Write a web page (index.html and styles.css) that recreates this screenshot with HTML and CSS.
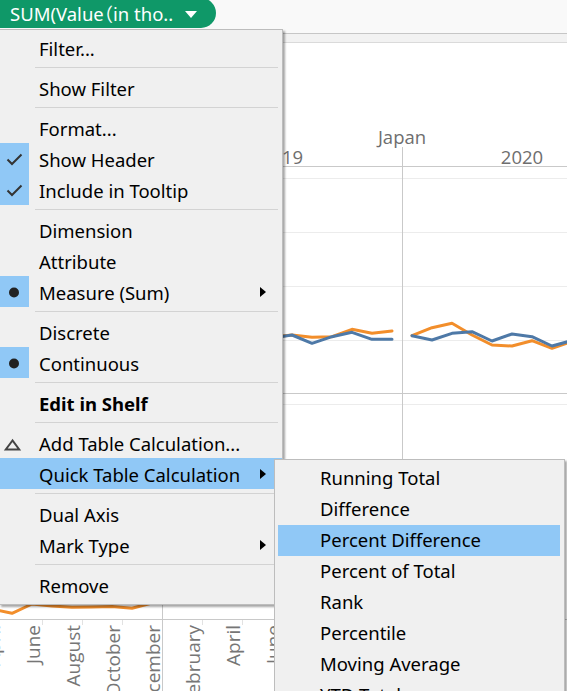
FILE: index.html
```html
<!DOCTYPE html>
<html lang="en">
<head>
<meta charset="utf-8">
<title>Tableau pill menu</title>
<link rel="stylesheet" href="styles.css">
</head>
<body>
<div class="app">
  <div class="shelf">
    <div class="pill">
      <span class="pill-text">SUM(Value<span class="fw">（</span>in tho..</span>
      <svg class="caret" width="12" height="7" viewBox="0 0 12 7"><polygon points="0,0 12,0 6,7" fill="#fff"/></svg>
    </div>
  </div>

  <svg class="chart" width="567" height="658" viewBox="0 33 567 658">
    <rect x="0" y="33" width="567" height="9" fill="#f2f2f2"/>
    <line x1="0" y1="33.5" x2="567" y2="33.5" stroke="#c6c6c6"/>
    <line x1="0" y1="42.5" x2="567" y2="42.5" stroke="#dadada"/>
    <g stroke="#ececec">
      <line x1="0" y1="178.5" x2="567" y2="178.5"/>
      <line x1="0" y1="232.5" x2="567" y2="232.5"/>
      <line x1="0" y1="286.5" x2="567" y2="286.5"/>
      <line x1="0" y1="340.5" x2="567" y2="340.5"/>
      <line x1="0" y1="404.5" x2="567" y2="404.5"/>
    </g>
    <g stroke="#c9c9c9">
      <line x1="0" y1="166.5" x2="567" y2="166.5"/>
      <line x1="0" y1="393.5" x2="567" y2="393.5"/>
      <line x1="0" y1="619.5" x2="567" y2="619.5"/>
      <line x1="402.5" y1="147" x2="402.5" y2="691"/>
      <line x1="162.5" y1="167" x2="162.5" y2="691"/>
    </g>
    <g stroke="#e2e2e2">
      <line x1="42.5" y1="620" x2="42.5" y2="625"/>
      <line x1="82.5" y1="620" x2="82.5" y2="625"/>
      <line x1="122.5" y1="620" x2="122.5" y2="625"/>
      <line x1="202.5" y1="620" x2="202.5" y2="625"/>
      <line x1="242.5" y1="620" x2="242.5" y2="625"/>
    </g>
    <text class="hdr" x="402" y="144" text-anchor="middle">Japan</text>
    <text class="hdr" x="282" y="164" text-anchor="middle">2019</text>
    <text class="hdr" x="522" y="164" text-anchor="middle">2020</text>

    <g class="months">
      <text transform="translate(0 625) rotate(-90)" text-anchor="end">April</text>
      <text transform="translate(40 625) rotate(-90)" text-anchor="end">June</text>
      <text transform="translate(80 625) rotate(-90)" text-anchor="end">August</text>
      <text transform="translate(120 625) rotate(-90)" text-anchor="end">October</text>
      <text transform="translate(160 625) rotate(-90)" text-anchor="end">December</text>
      <text transform="translate(200 625) rotate(-90)" text-anchor="end">February</text>
      <text transform="translate(240 625) rotate(-90)" text-anchor="end">April</text>
      <text transform="translate(280 625) rotate(-90)" text-anchor="end">June</text>
    </g>

    <g fill="none" stroke-width="3" stroke-linejoin="round" stroke-linecap="round">
      <polyline stroke="#f28e2b" points="172,338 192,334 212,340 232,336 252,333 272,337 292,335 312,337.3 332,336.7 352,329.3 372,333.3 392,331"/>
      <polyline stroke="#4e79a7" points="172,340 192,336 212,342 232,338 252,335 272,338 292,335 312,343.3 332,336.7 352,332.3 372,339.3 392,339.3"/>
      <polyline stroke="#f28e2b" points="412,335.7 432,327.7 452,323.3 472,335 492,345 512,346 532,340.7 552,348.3 572,341.5"/>
      <polyline stroke="#4e79a7" points="412,335.7 432,340 452,333.3 472,331.7 492,341 512,334 532,336.7 552,346 572,340.5"/>
      <polyline stroke="#f28e2b" points="-8,609 12,613.3 32,604 52,606 72,607.3 92,607 112,606.5 132,608.3 152,603"/>
    </g>
  </svg>

  <div class="menu main-menu">
    <div class="item"><span class="mark"></span><span class="label">Filter...</span></div>
    <div class="sep"></div>
    <div class="item"><span class="mark"></span><span class="label">Show Filter</span></div>
    <div class="sep"></div>
    <div class="item"><span class="mark"></span><span class="label">Format...</span></div>
    <div class="item"><span class="mark on"><svg width="29" height="31" viewBox="0 0 29 31"><polyline points="7.5,16.5 12,21 21.5,11.5" fill="none" stroke="#333" stroke-width="2"/></svg></span><span class="label">Show Header</span></div>
    <div class="item"><span class="mark on"><svg width="29" height="31" viewBox="0 0 29 31"><polyline points="7.5,16.5 12,21 21.5,11.5" fill="none" stroke="#333" stroke-width="2"/></svg></span><span class="label">Include in Tooltip</span></div>
    <div class="sep"></div>
    <div class="item"><span class="mark"></span><span class="label">Dimension</span></div>
    <div class="item"><span class="mark"></span><span class="label">Attribute</span></div>
    <div class="item"><span class="mark on"><svg width="29" height="31" viewBox="0 0 29 31"><circle cx="14" cy="16.5" r="5" fill="#222"/></svg></span><span class="label">Measure (Sum)</span><svg class="arrow" width="6" height="10" viewBox="0 0 6 10"><polygon points="0,0 6,5 0,10" fill="#000"/></svg></div>
    <div class="sep"></div>
    <div class="item"><span class="mark"></span><span class="label">Discrete</span></div>
    <div class="item"><span class="mark on"><svg width="29" height="31" viewBox="0 0 29 31"><circle cx="14" cy="16.5" r="5" fill="#222"/></svg></span><span class="label">Continuous</span></div>
    <div class="sep"></div>
    <div class="item"><span class="mark"></span><span class="label bold">Edit in Shelf</span></div>
    <div class="sep"></div>
    <div class="item"><span class="mark"><svg width="29" height="31" viewBox="0 0 29 31"><polygon points="12.5,13.5 5.8,22.5 19.2,22.5" fill="none" stroke="#444" stroke-width="2" stroke-linejoin="miter"/></svg></span><span class="label">Add Table Calculation...</span></div>
    <div class="item active"><span class="mark"></span><span class="label">Quick Table Calculation</span><svg class="arrow" width="6" height="10" viewBox="0 0 6 10"><polygon points="0,0 6,5 0,10" fill="#000"/></svg></div>
    <div class="sep"></div>
    <div class="item"><span class="mark"></span><span class="label">Dual Axis</span></div>
    <div class="item"><span class="mark"></span><span class="label">Mark Type</span><svg class="arrow" width="6" height="10" viewBox="0 0 6 10"><polygon points="0,0 6,5 0,10" fill="#000"/></svg></div>
    <div class="sep"></div>
    <div class="item"><span class="mark"></span><span class="label">Remove</span></div>
  </div>

  <div class="menu sub-menu">
    <div class="sitem">Running Total</div>
    <div class="sitem">Difference</div>
    <div class="sitem active">Percent Difference</div>
    <div class="sitem">Percent of Total</div>
    <div class="sitem">Rank</div>
    <div class="sitem">Percentile</div>
    <div class="sitem">Moving Average</div>
    <div class="sitem">YTD Total</div>
  </div>
</div>
</body>
</html>
```

FILE: styles.css
```css
html, body {
  margin: 0;
  padding: 0;
}

body {
  width: 567px;
  height: 691px;
  overflow: hidden;
  background: #ffffff;
  font-family: "Noto Sans", "Noto Sans CJK SC", sans-serif;
}

.app {
  position: relative;
  width: 567px;
  height: 691px;
  overflow: hidden;
}

.shelf {
  height: 33px;
  background: #f9f9f9;
  display: flex;
  align-items: flex-start;
}

.pill {
  display: flex;
  align-items: center;
  gap: 12px;
  height: 30px;
  margin-top: -2px;
  margin-left: -14px;
  padding: 0 19px 0 24px;
  background: #0f9868;
  border-radius: 15px;
  color: #ffffff;
  font-size: 18.5px;
  white-space: nowrap;
}

.fw {
  font-family: "Noto Sans CJK SC", sans-serif;
  font-feature-settings: "halt";
}

.caret {
  display: block;
  margin-top: 2px;
}

.chart {
  display: block;
}

.hdr {
  font-family: "Open Sans", sans-serif;
  font-size: 18.5px;
  fill: #6e6e6e;
}

.months text {
  font-family: "Open Sans", sans-serif;
  font-size: 19px;
  fill: #767676;
}

.menu {
  position: absolute;
  background: #f0f0f0;
  border: 1px solid #bdbdbd;
  box-shadow: 2px 2px 2px rgba(0, 0, 0, 0.35);
  font-size: 18.5px;
  color: #000000;
}

.main-menu {
  left: -1px;
  top: 29px;
  width: 282px;
  padding: 2px 0 4px 0;
}

.item {
  display: flex;
  align-items: center;
  height: 31px;
  padding-top: 1px;
  box-sizing: border-box;
}

.item.active {
  background: #90c8f6;
}

.mark {
  flex: none;
  width: 29px;
  height: 31px;
  margin-top: -1px;
  margin-right: 10px;
  display: flex;
  align-items: center;
  justify-content: center;
}

.mark svg {
  display: block;
}

.mark.on {
  background: #90c8f6;
}

.label {
  flex: 1;
  white-space: nowrap;
}

.bold {
  font-weight: 700;
}

.arrow {
  flex: none;
  display: block;
  margin-right: 16px;
}

.sep {
  height: 1px;
  margin: 4px 4px 4px 35px;
  background: #d3d3d3;
}

.sub-menu {
  left: 274px;
  top: 459px;
  width: 282px;
  height: 240px;
  padding: 3px 4px 0 3px;
}

.sitem {
  height: 31px;
  line-height: 30px;
  padding-left: 42px;
  box-sizing: border-box;
  white-space: nowrap;
}

.sitem.active {
  background: #90c8f6;
}
```
